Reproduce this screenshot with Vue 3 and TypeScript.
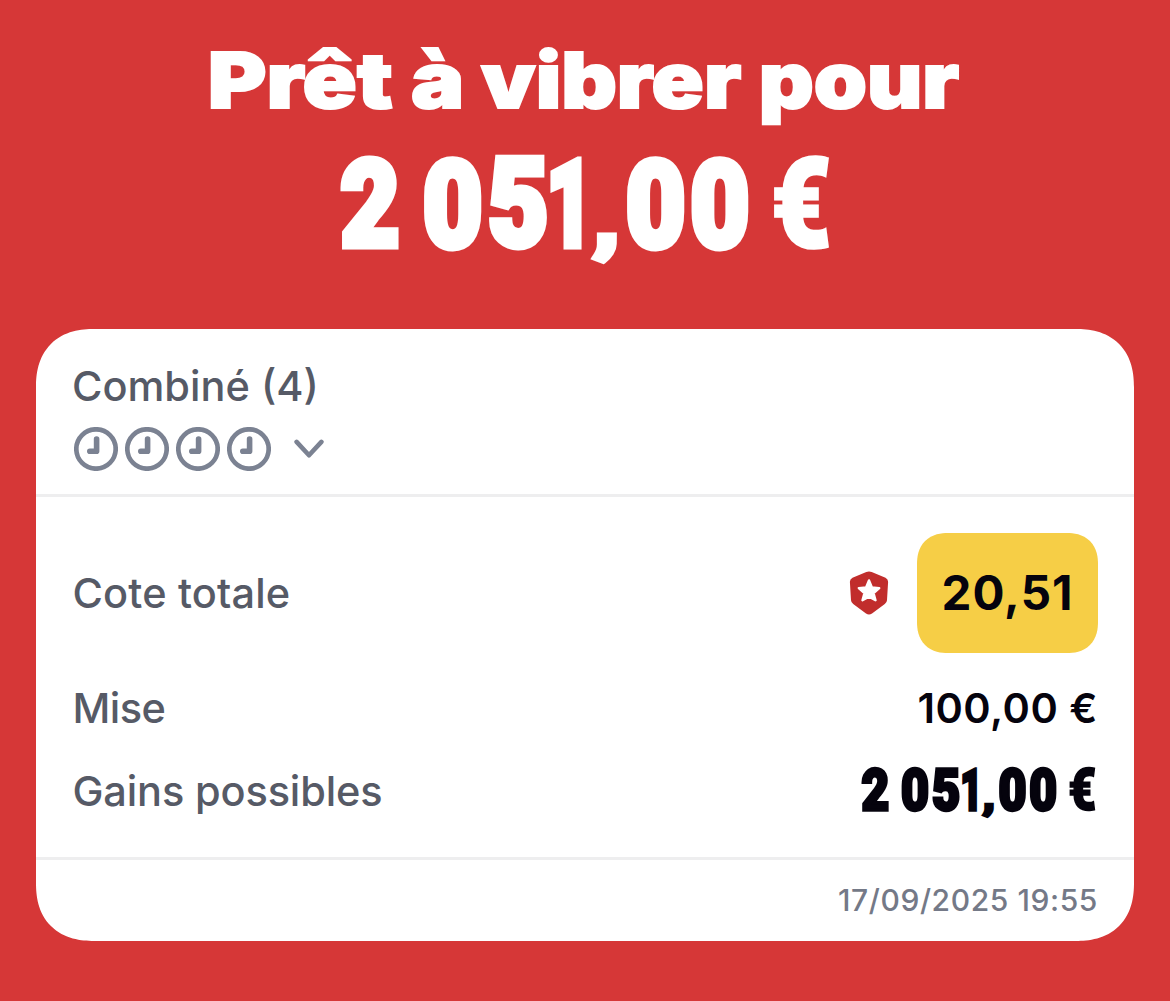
<script setup lang="ts">
interface Piece { text: string; left: number; right: number; top?: number; bottom?: number }
interface Fitted { text: string; transform: string }

const pen = document.createElement('canvas').getContext('2d')!

// Stretches each piece so that its outlined ink spans left..right;
// pieces with a top and bottom are stretched vertically as well.
function fit(pieces: Piece[], font: string, baseline: number, stroke: number): Fitted[] {
  pen.font = font
  return pieces.map(({ text, left, right, top, bottom }) => {
    const m = pen.measureText(text)
    const outline = text === '€' ? stroke / 2 : stroke
    const sx = (right - left) / (m.actualBoundingBoxRight + m.actualBoundingBoxLeft + outline)
    const x = left + (m.actualBoundingBoxLeft + outline / 2) * sx
    let sy = 1
    let y = baseline
    if (top !== undefined && bottom !== undefined) {
      sy = (bottom - top) / (m.actualBoundingBoxAscent + m.actualBoundingBoxDescent + outline)
      y = top + (m.actualBoundingBoxAscent + outline / 2) * sy
    }
    return { text, transform: `translate(${x.toFixed(2)} ${y.toFixed(2)}) scale(${sx.toFixed(4)} ${sy.toFixed(4)})` }
  })
}

const title = fit([
  { text: 'Prêt', left: 210, right: 393 },
  { text: 'à', left: 411, right: 462 },
  { text: 'vibrer', left: 480, right: 742 },
  { text: 'pour', left: 761, right: 960 },
], '900 77px Inter', 108.2, 2)

const amount: Piece[] = [
  { text: '2', left: 340, right: 399, top: 155, bottom: 249 },
  { text: '0', left: 424, right: 482, top: 155, bottom: 251 },
  { text: '5', left: 488.5, right: 547, top: 156, bottom: 251 },
  { text: '1', left: 550, right: 582, top: 156, bottom: 249 },
  { text: ',', left: 591, right: 617, top: 232, bottom: 264 },
  { text: '0', left: 627, right: 685, top: 155, bottom: 251 },
  { text: '0', left: 691.5, right: 749, top: 155, bottom: 251 },
  { text: '€', left: 774, right: 829, top: 155.5, bottom: 250 },
]
const heroAmount = fit(amount, '900 121px Roboto', 245, 7)
const k = 234.5 / 489
const gains = fit(
  amount.map(p => ({
    text: p.text,
    left: (p.left - 340) * k,
    right: (p.right - 340) * k,
    top: 7.5 + (p.top! - 155) * k,
    bottom: 7.5 + (p.bottom! - 155) * k,
  })),
  '900 58px Roboto', 49, 3.4,
)
const legs = [1, 2, 3, 4]
</script>

<template>
  <main class="screen">
    <svg class="hero" width="1170" height="329" viewBox="0 0 1170 329">
      <g class="title"><text v-for="p in title" :key="p.text" :transform="p.transform">{{ p.text }}</text></g>
      <g class="amount"><text v-for="(p, i) in heroAmount" :key="i" :class="{ euro: p.text === '€' }" :transform="p.transform">{{ p.text }}</text></g>
    </svg>
    <section class="card">
      <header class="head">
        <div class="kind">Combiné (4)</div>
        <div class="legs">
          <svg v-for="n in legs" :key="n" class="clock" width="44" height="44" viewBox="0 0 44 44">
            <circle cx="22" cy="22" r="19.7" stroke-width="4.7" />
            <path d="M22.6 12V24.2H15.8" stroke-width="5.6" />
          </svg>
          <svg class="chevron" width="30" height="20" viewBox="0 0 30 20">
            <path d="M2.6 2.9L15 16.2L27.4 2.9" stroke-width="4.6" />
          </svg>
        </div>
      </header>
      <div class="body">
        <div class="row odds">
          <span>Cote totale</span>
          <div class="right">
            <svg width="40" height="44" viewBox="0 0 40 44">
              <path d="M17.3 1.1Q20 -.2 22.7 1.1L36.5 6.7Q39.2 8 39.1 11L38 29.2Q37.8 31.6 35.8 33L23 42.4Q20 44.6 17 42.4L4.2 33Q2.2 31.6 2 29.2L.9 11Q.8 8 3.5 6.7Z" fill="#c12d2c" />
              <path d="M20 9.4L22.9 16.5L30.2 17.1L24.6 22.2L26.5 29.2L20 25.7L13.5 29.2L15.4 22.2L9.8 17.1L17.1 16.5Z" fill="#fff" stroke="#fff" stroke-width="2.4" stroke-linejoin="round" />
            </svg>
            <strong class="badge">20,51</strong>
          </div>
        </div>
        <div class="row stake"><span>Mise</span><strong>100,00 €</strong></div>
        <div class="row win">
          <span>Gains possibles</span>
          <svg class="gains" width="236" height="64" viewBox="0 0 236 64">
            <text v-for="(p, i) in gains" :key="i" :class="{ euro: p.text === '€' }" :transform="p.transform">{{ p.text }}</text>
          </svg>
        </div>
      </div>
      <footer class="foot">17/09/2025 19:55</footer>
    </section>
  </main>
</template>

<style>
body { margin: 0; background: #d63737; }
</style>

<style scoped>
.screen {
  box-sizing: border-box;
  width: 1170px;
  height: 1001px;
  overflow: hidden;
  background: #d63737;
  font-family: Inter, "Liberation Sans", sans-serif;
}
.hero { display: block; fill: #fff; }
.title { font: 900 77px Inter, sans-serif; stroke: #fff; stroke-width: 2; }
.amount { font: 900 121px Roboto, sans-serif; stroke: #fff; stroke-width: 7; }
.amount .euro { stroke-width: 3.5; }
.card {
  width: 1098px;
  height: 612px;
  margin: 0 auto;
  border-radius: 52px;
  background: #fff;
  color: #565a66;
  font-size: 41.5px;
  font-weight: 450;
  letter-spacing: 0;
  overflow: hidden;
}
.head {
  box-sizing: border-box;
  height: 168px;
  padding: 32px 37px 0;
  border-bottom: 3px solid #eeeeef;
}
.kind { margin-left: -1px; line-height: 50px; }
.legs { display: flex; align-items: center; gap: 7px; margin: 16px 0 0 1px; }
.clock, .chevron { fill: none; stroke: #7b8292; stroke-linecap: round; stroke-linejoin: round; }
.chevron { margin-left: 16px; }
.body {
  box-sizing: border-box;
  height: 363px;
  padding: 36px 36px 0 37px;
  border-bottom: 3px solid #eeeeef;
}
.row { display: flex; justify-content: space-between; align-items: center; }
.row > span { margin-left: -0.5px; }
.odds { height: 120px; }
.odds > span { letter-spacing: 0.15px; }
.right { display: flex; align-items: center; gap: 28px; }
.badge {
  width: 181px;
  height: 120px;
  border-radius: 28px;
  background: #f6ce46;
  color: #05030d;
  font-size: 47.5px;
  font-weight: 700;
  line-height: 120px;
  letter-spacing: 1px;
  text-align: center;
}
.stake { height: 50px; margin-top: 30px; }
.stake > span { letter-spacing: -0.6px; }
.stake strong { color: #05030d; font-size: 41.5px; font-weight: 640; letter-spacing: 0.5px; }
.win { height: 64px; margin-top: 26px; }
.win > span { letter-spacing: -0.15px; }
.gains { margin-right: 1px; overflow: visible; fill: #05030d; stroke: #05030d; stroke-width: 3.4; font: 900 58px Roboto, sans-serif; }
.gains .euro { stroke-width: 1.7; }
.foot {
  padding-right: 36px;
  color: #747987;
  font-size: 30px;
  line-height: 80px;
  letter-spacing: 0.6px;
  text-align: right;
}
@supports (corner-shape: superellipse(1.2)) {
  .card { border-radius: 58px; corner-shape: superellipse(1.22); }
  .badge { border-radius: 31px; corner-shape: superellipse(1.2); }
}
</style>
